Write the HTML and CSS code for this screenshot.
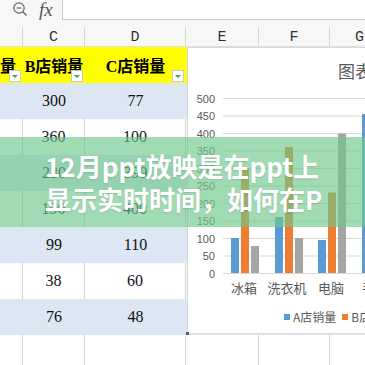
FILE: index.html
```html
<!DOCTYPE html>
<html lang="zh-CN">
<head>
<meta charset="utf-8">
<title>Excel chart</title>
<link rel="stylesheet" href="styles.css">
</head>
<body>
<div class="app">
  <div class="formula-bar">
    <div class="fb-tools">
      <svg class="fb-icon" width="18" height="18" viewBox="0 0 18 18">
        <circle cx="7" cy="7" r="5.2" fill="none" stroke="#666" stroke-width="1.2"/>
        <line x1="4.6" y1="7" x2="9.4" y2="7" stroke="#666" stroke-width="1.2"/>
        <line x1="10.8" y1="10.8" x2="14.5" y2="14.5" stroke="#666" stroke-width="1.4"/>
      </svg>
      <span class="fx">fx</span>
    </div>
    <div class="fb-input"></div>
  </div>

  <div class="sheet">
    <div class="row col-head">
      <div class="cell"></div>
      <div class="cell">C</div>
      <div class="cell">D</div>
      <div class="cell">E</div>
      <div class="cell">F</div>
      <div class="cell">G</div>
    </div>
    <div class="row head-row">
      <div class="cell hc first"><span>量</span><i class="filter"></i></div>
      <div class="cell hc"><span>B店销量</span><i class="filter"></i></div>
      <div class="cell hc"><span>C店销量</span><i class="filter"></i></div>
      <div class="cell"></div>
      <div class="cell"></div>
      <div class="cell"></div>
    </div>
    <div class="row band"><div class="cell"></div><div class="cell">300</div><div class="cell">77</div><div class="cell"></div><div class="cell"></div><div class="cell"></div></div>
    <div class="row plain"><div class="cell"></div><div class="cell">360</div><div class="cell">100</div><div class="cell"></div><div class="cell"></div><div class="cell"></div></div>
    <div class="row band"><div class="cell"></div><div class="cell">230</div><div class="cell">399</div><div class="cell"></div><div class="cell"></div><div class="cell"></div></div>
    <div class="row plain"><div class="cell"></div><div class="cell">190</div><div class="cell">400</div><div class="cell"></div><div class="cell"></div><div class="cell"></div></div>
    <div class="row band"><div class="cell"></div><div class="cell">99</div><div class="cell">110</div><div class="cell"></div><div class="cell"></div><div class="cell"></div></div>
    <div class="row plain"><div class="cell"></div><div class="cell">38</div><div class="cell">60</div><div class="cell"></div><div class="cell"></div><div class="cell"></div></div>
    <div class="row band"><div class="cell"></div><div class="cell">76</div><div class="cell">48</div><div class="cell"></div><div class="cell"></div><div class="cell"></div></div>
    <div class="row plain"><div class="cell"></div><div class="cell"></div><div class="cell"></div><div class="cell"></div><div class="cell"></div><div class="cell"></div></div>

    <div class="chart">
      <div class="chart-title">图表标题</div>
      <svg class="plot" width="356" height="210" viewBox="0 0 356 210">
        <g stroke="#d9d9d9" stroke-width="1">
          <line x1="36" y1="7.5" x2="356" y2="7.5"/>
          <line x1="36" y1="25" x2="356" y2="25"/>
          <line x1="36" y1="42.5" x2="356" y2="42.5"/>
          <line x1="36" y1="60" x2="356" y2="60"/>
          <line x1="36" y1="77.5" x2="356" y2="77.5"/>
          <line x1="36" y1="95" x2="356" y2="95"/>
          <line x1="36" y1="112.5" x2="356" y2="112.5"/>
          <line x1="36" y1="130" x2="356" y2="130"/>
          <line x1="36" y1="147.5" x2="356" y2="147.5"/>
          <line x1="36" y1="165" x2="356" y2="165"/>
          <line x1="36" y1="182.5" x2="356" y2="182.5"/>
        </g>
        <g class="ylab" text-anchor="end">
          <text x="28" y="11.5">500</text>
          <text x="28" y="29">450</text>
          <text x="28" y="46.5">400</text>
          <text x="28" y="64">350</text>
          <text x="28" y="81.5">300</text>
          <text x="28" y="99">250</text>
          <text x="28" y="116.5">200</text>
          <text x="28" y="134">150</text>
          <text x="28" y="151.5">100</text>
          <text x="28" y="169">50</text>
          <text x="28" y="186.5">0</text>
        </g>
        <g fill="#5b9bd5">
          <rect x="44" y="147" width="8" height="35"/>
          <rect x="88" y="126" width="8" height="56"/>
          <rect x="131" y="149" width="8" height="33"/>
          <rect x="175" y="23" width="8" height="159"/>
        </g>
        <g fill="#ed7d31">
          <rect x="54" y="77" width="8" height="105"/>
          <rect x="98" y="56" width="8" height="126"/>
          <rect x="141" y="101.5" width="8" height="80.5"/>
          <rect x="185" y="115.5" width="8" height="66.5"/>
        </g>
        <g fill="#a5a5a5">
          <rect x="64" y="155" width="8" height="27"/>
          <rect x="108" y="147" width="8" height="35"/>
          <rect x="151" y="42.5" width="8" height="139.5"/>
          <rect x="195" y="42" width="8" height="140"/>
        </g>
        <g class="xlab" text-anchor="middle">
          <text x="57" y="202">冰箱</text>
          <text x="100" y="202">洗衣机</text>
          <text x="144" y="202">电脑</text>
          <text x="188" y="202">手机</text>
        </g>
      </svg>
      <div class="legend">
        <span class="lg"><i class="sw blue"></i>A店销量</span>
        <span class="lg"><i class="sw orange"></i>B店销量</span>
        <span class="lg"><i class="sw grey"></i>C店销量</span>
      </div>
      <i class="handle"></i>
    </div>
  </div>

  <div class="banner">
    <p class="banner-text">12月ppt放映是在ppt上<br>显示实时时间，如何在P</p>
  </div>
</div>
</body>
</html>
```

FILE: styles.css
```css
* { box-sizing: border-box; }
html, body { margin: 0; padding: 0; }
body {
  width: 365px;
  height: 365px;
  overflow: hidden;
  background: #fff;
  font-family: "Liberation Serif", "Noto Sans CJK SC", serif;
}
.app {
  position: relative;
  width: 365px;
  height: 365px;
  overflow: hidden;
}

/* formula bar */
.formula-bar {
  display: flex;
  height: 27px;
  background: #f7f7f7;
}
.fb-tools {
  width: 62px;
  display: flex;
  align-items: flex-start;
  padding: 1px 0 0 12px;
  gap: 8px;
}
.fb-icon { display: block; }
.fx {
  font-family: "Liberation Serif", serif;
  font-style: italic;
  font-size: 19px;
  line-height: 18px;
  color: #555;
  margin-left: 1px;
}
.fb-input {
  flex: 1;
  height: 21px;
  margin-top: -1px;
  background: #fff;
  border: 1px solid #c9c9c9;
  border-right: none;
}

/* sheet */
.sheet {
  position: relative;
}
.row {
  display: grid;
  grid-template-columns: 23px 62px 101px 73px 71px 60px;
  height: 36px;
}
.cell {
  display: flex;
  align-items: center;
  justify-content: center;
  overflow: hidden;
  white-space: nowrap;
  font-size: 16px;
  color: #111;
}
.col-head {
  height: 20px;
  background: #f7f7f7;
  border-bottom: 1px solid #e0e0e0;
}
.col-head .cell {
  font-family: "Liberation Mono", monospace;
  font-size: 15px;
  color: #333;
  border-right: 1px solid #d6d6d6;
  padding-top: 2px;
}
.head-row {
  background: #ffff00;
}
.head-row .cell {
  position: relative;
  font-family: "Liberation Serif", "Noto Sans CJK SC", serif;
  font-weight: 700;
  font-size: 16px;
  color: #000;
}
.head-row .first { justify-content: flex-start; }
.filter {
  position: absolute;
  right: 2px;
  bottom: 1px;
  width: 12px;
  height: 12px;
  background: #fff;
  border: 1px solid #c8c8c8;
}
.filter::after {
  content: "";
  position: absolute;
  left: 2px;
  top: 4px;
  border-left: 3px solid transparent;
  border-right: 3px solid transparent;
  border-top: 3px solid #3a9e8a;
}
.band { background: #dde7f3; }
.plain .cell { border-right: 1px solid #d4d4d4; }

/* chart */
.chart {
  position: absolute;
  left: 187px;
  top: 20px;
  width: 356px;
  height: 287px;
  background: #fff;
  border: 1px solid #d9d9d9;
  display: flex;
  flex-direction: column;
  font-family: "Liberation Sans", "Noto Sans CJK SC", sans-serif;
}
.chart-title {
  height: 43px;
  padding-top: 13px;
  text-align: center;
  font-family: "Noto Sans CJK SC", sans-serif;
  font-size: 17px;
  line-height: 20px;
  color: #595959;
  padding-left: 14px;
}
.plot { display: block; margin-left: -1px; }
.ylab text {
  font-family: "Liberation Sans", sans-serif;
  font-size: 11px;
  fill: #595959;
}
.xlab text {
  font-family: "Noto Sans CJK SC", sans-serif;
  font-size: 13px;
  fill: #595959;
}
.legend {
  display: flex;
  justify-content: center;
  gap: 6px;
  padding-top: 9px;
  padding-left: 8px;
  font-family: "Noto Sans CJK SC", sans-serif;
  font-size: 12px;
  line-height: 14px;
  color: #595959;
}
.lg { display: flex; align-items: center; gap: 3px; }
.sw { display: block; width: 6px; height: 6px; }
.sw.blue { background: #5b9bd5; }
.sw.orange { background: #ed7d31; }
.sw.grey { background: #a5a5a5; }
.handle {
  position: absolute;
  left: -2px;
  bottom: -2px;
  width: 3px;
  height: 3px;
  background: #4a5f86;
}

/* banner overlay */
.banner {
  position: absolute;
  left: 0;
  top: 137px;
  width: 365px;
  height: 90px;
  background: rgba(110, 200, 140, 0.65);
  display: flex;
  align-items: center;
}
.banner-text {
  margin: 0;
  padding-left: 45px;
  font-family: "Noto Sans CJK SC", sans-serif;
  font-weight: 700;
  font-size: 26px;
  line-height: 33px;
  color: #fff;
  white-space: nowrap;
  text-shadow: 0 1px 2px rgba(0, 0, 0, 0.12);
}
```
